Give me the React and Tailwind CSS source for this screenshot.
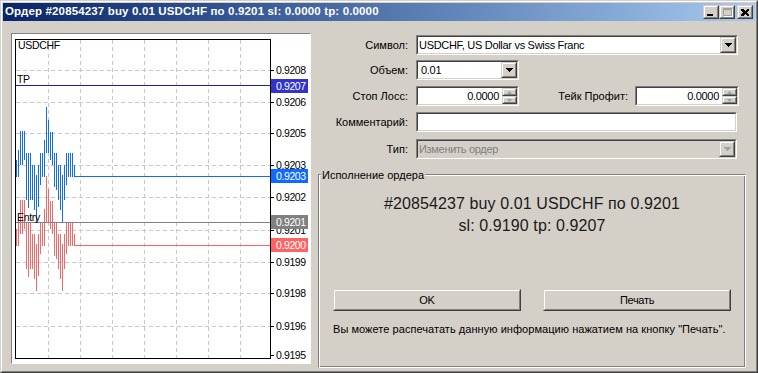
import React from "react";

const blue = [
  [16, 160, 177], [18, 150, 177], [20, 131, 165], [22, 131, 165], [24, 131, 160],
  [26, 153, 200], [28, 153, 208], [30, 153, 200], [32, 165, 200], [34, 165, 210],
  [36, 175, 222], [38, 165, 207], [40, 153, 185], [42, 153, 177], [44, 140, 177],
  [46, 107, 153], [48, 120, 153], [50, 132, 160], [52, 132, 165], [54, 153, 187],
  [56, 153, 190], [58, 165, 200], [60, 165, 210], [62, 175, 222], [64, 165, 200],
  [66, 153, 185], [68, 153, 177], [70, 153, 177], [72, 153, 177], [74, 165, 177],
];

const gridY = [70, 102, 133, 165, 197, 230, 262, 293, 326];
const gridX = [48, 80, 112, 144, 176, 208, 240];
const labels = [
  ["0.9208", 70], ["0.9206", 102], ["0.9205", 133], ["0.9203", 165], ["0.9202", 197],
  ["0.9201", 230], ["0.9199", 262], ["0.9198", 293], ["0.9196", 326], ["0.9195", 355],
];
const marks = [
  ["0.9207", 86, "#3333cc"],
  ["0.9203", 176, "#0f6bff"],
  ["0.9201", 222, "#808080"],
  ["0.9200", 245, "#ff6464"],
];

function Chart() {
  return (
    <svg width="298" height="329" viewBox="12 34 298 329" shapeRendering="crispEdges" className="block">
      <rect x="12" y="34" width="298" height="329" fill="#fff" />
      {gridY.map((y) => (
        <line key={"gy" + y} x1="16" x2="270" y1={y + 0.5} y2={y + 0.5} stroke="#c8c8c8" strokeDasharray="4 3" />
      ))}
      {gridX.map((x) => (
        <line key={"gx" + x} x1={x + 0.5} x2={x + 0.5} y1="40" y2="358" stroke="#c8c8c8" strokeDasharray="4 3" />
      ))}
      {labels.map(([t, y]) => (
        <line key={"tk" + t} x1="270" x2="274" y1={y + 0.5} y2={y + 0.5} stroke="#000" />
      ))}
      <line x1="16" x2="271" y1="85.5" y2="85.5" stroke="#202090" />
      {blue.map(([x, a, b]) => (
        <rect key={"b" + x} x={x} y={a} width="1" height={b - a} fill="#0f6bff" />
      ))}
      {blue.map(([x, a, b]) => (
        <rect key={"r" + x} x={x} y={a + 69} width="1" height={b - a} fill="#ff6464" />
      ))}
      <line x1="74" x2="271" y1="176.5" y2="176.5" stroke="#0f6bff" />
      <line x1="74" x2="271" y1="245.5" y2="245.5" stroke="#ff6464" />
      <line x1="16" x2="271" y1="222.5" y2="222.5" stroke="#808080" />
      <rect x="15.5" y="39.5" width="255" height="319" fill="none" stroke="#000" />
      <g fontFamily="Liberation Sans, Arial, sans-serif" fontSize="10.5">
        <text x="18" y="49" fill="#000">USDCHF</text>
        <text x="17" y="83" fill="#000">TP</text>
        <text x="17" y="221" fill="#000">Entry</text>
      </g>
      <g fontFamily="Liberation Sans, Arial, sans-serif" fontSize="10.5" letterSpacing="-0.4">
        {labels.map(([t, y]) => (
          <text key={"l" + t + y} x="276" y={y + 4} fill="#000">{t}</text>
        ))}
        {marks.map(([t, y, c]) => (
          <g key={"m" + t}>
            <rect x="271" y={y - 7} width="37" height="14" fill={c} />
            <text x="276" y={y + 4} fill="#fff">{t}</text>
          </g>
        ))}
      </g>
    </svg>
  );
}

function Sunken({ className, children }) {
  return (
    <div className={"border border-t-[#808080] border-l-[#808080] border-b-white border-r-white " + className}>
      <div className="h-full border border-t-[#404040] border-l-[#404040] border-b-[#d4d0c8] border-r-[#d4d0c8] flex items-center">
        {children}
      </div>
    </div>
  );
}

function Raised({ className, children }) {
  return (
    <div className={"border border-t-[#d4d0c8] border-l-[#d4d0c8] border-b-[#404040] border-r-[#404040] bg-[#d4d0c8] " + className}>
      <div className="h-full border border-t-white border-l-white border-b-[#808080] border-r-[#808080] flex items-center justify-center">
        {children}
      </div>
    </div>
  );
}

function Arrow({ color }) {
  return (
    <svg width="7" height="4" viewBox="0 0 7 4" shapeRendering="crispEdges">
      <polygon points="0,0 7,0 3.5,4" fill={color} />
    </svg>
  );
}

function DropBtn({ disabled }) {
  return (
    <Raised className="w-[16px] h-[16px] shrink-0">
      <Arrow color={disabled ? "#a0a0a0" : "#000"} />
    </Raised>
  );
}

function Spin() {
  return (
    <div className="flex flex-col shrink-0 w-[15px] h-[16px]">
      <Raised className="h-[8px] w-full">
        <svg width="5" height="3" viewBox="0 0 5 3"><polygon points="0,3 5,3 2.5,0" fill="#a0a0a0" /></svg>
      </Raised>
      <Raised className="h-[8px] w-full">
        <svg width="5" height="3" viewBox="0 0 5 3"><polygon points="0,0 5,0 2.5,3" fill="#a0a0a0" /></svg>
      </Raised>
    </div>
  );
}

function Label({ children, className }) {
  return <div className={"text-right shrink-0 tracking-[0px] " + className}>{children}</div>;
}

export default function App() {
  return (
    <div className="w-[758px] h-[373px] overflow-hidden font-['Liberation_Sans',Arial,sans-serif] text-[11px] tracking-[-0.3px] text-black">
      <div className="w-full h-full border border-t-[#d4d0c8] border-l-[#d4d0c8] border-b-[#404040] border-r-[#404040] bg-[#d4d0c8]">
        <div className="w-full h-full border border-t-white border-l-white border-b-[#808080] border-r-[#808080] p-[1px] flex flex-col">
          {/* Title bar */}
          <div className="h-[18px] shrink-0 flex items-center bg-gradient-to-r from-[#0a246a] to-[#a6caf0] pl-[2px] pr-[2px]">
            <div className="flex-1 text-white font-bold text-[11.5px] tracking-[0.15px] leading-none whitespace-nowrap">
              Ордер #20854237 buy 0.01 USDCHF по 0.9201 sl: 0.0000 tp: 0.0000
            </div>
            <div className="flex items-center">
              <Raised className="w-[16px] h-[14px]">
                <div className="w-[6px] h-[2px] bg-black mt-[6px] mr-[2px]" />
              </Raised>
              <Raised className="w-[16px] h-[14px]">
                <div className="w-[9px] h-[8px] border border-[#a0a0a0] border-t-2 shadow-[1px_1px_0_#fff]" />
              </Raised>
              <Raised className="w-[16px] h-[14px] ml-[2px]">
                <svg width="8" height="7" viewBox="0 0 8 7" shapeRendering="crispEdges">
                  <path d="M0 0h2l2 2 2-2h2v1l-2 2.5 2 2.5v1h-2l-2-2-2 2h-2v-1l2-2.5-2-2.5z" fill="#000" />
                </svg>
              </Raised>
            </div>
          </div>

          {/* Body */}
          <div className="flex pl-[8px] pt-[12px]">
            <div className="w-[300px] h-[331px] shrink-0 border border-t-[#808080] border-l-[#808080] border-b-white border-r-white">
              <Chart />
            </div>

            <div className="ml-[7px] w-[428px] flex flex-col pt-[2px]">
              <div className="flex items-center h-[20px]">
                <Label className="w-[90px]">Символ:</Label>
                <Sunken className="ml-[8px] w-[322px] h-[20px] bg-white">
                  <span className="flex-1 pl-[1px]">USDCHF, US Dollar vs Swiss Franc</span>
                  <DropBtn />
                </Sunken>
              </div>
              <div className="flex items-center h-[20px] mt-[5px]">
                <Label className="w-[90px]">Объем:</Label>
                <Sunken className="ml-[8px] w-[103px] h-[20px] bg-white">
                  <span className="flex-1 pl-[3px]">0.01</span>
                  <DropBtn />
                </Sunken>
              </div>
              <div className="flex items-center h-[20px] mt-[6px]">
                <Label className="w-[90px]">Стоп Лосс:</Label>
                <Sunken className="ml-[8px] w-[103px] h-[20px] bg-white">
                  <span className="flex-1 text-right pr-[3px]">0.0000</span>
                  <Spin />
                </Sunken>
                <Label className="w-[109px]">Тейк Профит:</Label>
                <Sunken className="ml-[7px] w-[104px] h-[20px] bg-white">
                  <span className="flex-1 text-right pr-[3px]">0.0000</span>
                  <Spin />
                </Sunken>
              </div>
              <div className="flex items-center h-[20px] mt-[6px]">
                <Label className="w-[90px]">Комментарий:</Label>
                <Sunken className="ml-[8px] w-[321px] h-[20px] bg-white" />
              </div>
              <div className="flex items-center h-[20px] mt-[7px]">
                <Label className="w-[90px]">Тип:</Label>
                <Sunken className="ml-[8px] w-[321px] h-[20px] bg-[#d4d0c8]">
                  <span className="flex-1 pl-[1px] text-[#808080]">Изменить ордер</span>
                  <DropBtn disabled />
                </Sunken>
              </div>

              <div className="relative mt-[15px] h-[194px] border border-t-[#808080] border-l-[#808080] border-b-white border-r-white shadow-[inset_1px_1px_0_#fff,inset_-1px_-1px_0_#808080] flex flex-col items-center">
                <div className="absolute -top-[7px] left-[2px] px-[1px] bg-[#d4d0c8] leading-[14px] tracking-[0px]">Исполнение ордера</div>
                <div className="mt-[18px] text-[16px] tracking-[0.1px] leading-[22px] text-center text-[#1a1a1a]">
                  <div>#20854237 buy 0.01 USDCHF по 0.9201</div>
                  <div>sl: 0.9190 tp: 0.9207</div>
                </div>
                <div className="mt-[52px] w-full flex pl-[14px] gap-[22px]">
                  <Raised className="w-[188px] h-[22px]">OK</Raised>
                  <Raised className="w-[188px] h-[22px]">Печать</Raised>
                </div>
                <div className="self-start pl-[14px] mt-[11px] leading-[14px] tracking-[0.05px]">
                  Вы можете распечатать данную информацию нажатием на кнопку "Печать".
                </div>
              </div>
            </div>
          </div>
        </div>
      </div>
    </div>
  );
}
